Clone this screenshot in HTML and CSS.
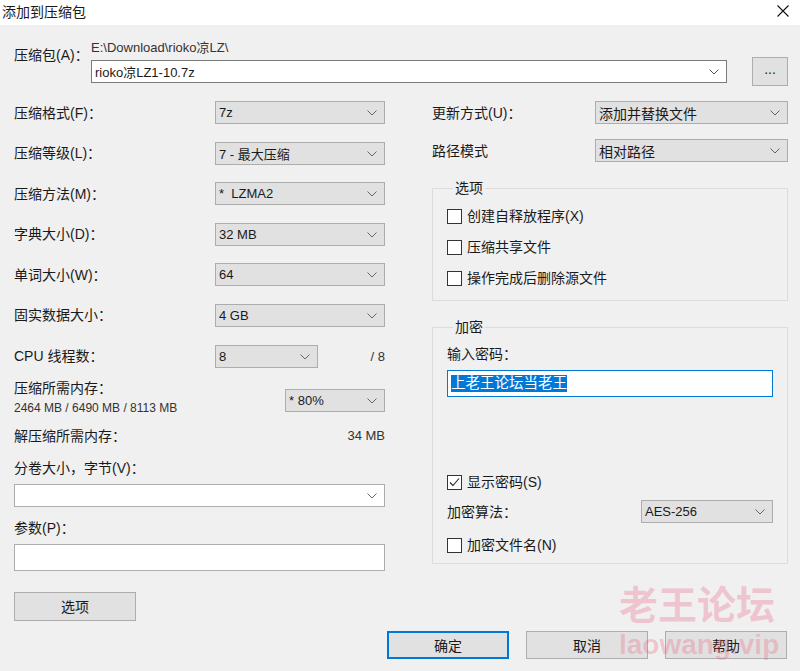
FILE: index.html
```html
<!DOCTYPE html>
<html lang="zh-CN">
<head>
    <meta charset="UTF-8">
    <title>添加到压缩包</title>
    <link rel="stylesheet" href="styles.css">
</head>
<body>
<div class="window">
    <div class="titlebar">
        <span class="title">添加到压缩包</span>
        <svg class="close" width="12" height="12" viewBox="0 0 12 12"><path d="M0.5 0.5 L11.5 11.5 M11.5 0.5 L0.5 11.5" stroke="#111" stroke-width="1.1" fill="none"/></svg>
    </div>
    <div class="content">
        <div class="archive-row">
            <div class="archive-label">压缩包(A)：</div>
            <div class="archive-path">
                <div class="path">E:\Download\rioko凉LZ\</div>
                <div class="combo white tall">
                    <span>rioko凉LZ1-10.7z</span>
                    <svg class="chev" width="10" height="6" viewBox="0 0 10 6"><path d="M0.5 0.5 L5 5 L9.5 0.5" stroke="#555" fill="none"/></svg>
                </div>
            </div>
            <button class="btn browse">...</button>
        </div>

        <div class="columns">
            <div class="col-left">
                <div class="form-grid">
                    <div class="lbl">压缩格式(F)：</div>
                    <div class="combo"><span>7z</span><svg class="chev" width="10" height="6" viewBox="0 0 10 6"><path d="M0.5 0.5 L5 5 L9.5 0.5" stroke="#666" fill="none"/></svg></div>

                    <div class="lbl">压缩等级(L)：</div>
                    <div class="combo"><span>7 - 最大压缩</span><svg class="chev" width="10" height="6" viewBox="0 0 10 6"><path d="M0.5 0.5 L5 5 L9.5 0.5" stroke="#666" fill="none"/></svg></div>

                    <div class="lbl">压缩方法(M)：</div>
                    <div class="combo"><span>*&nbsp; LZMA2</span><svg class="chev" width="10" height="6" viewBox="0 0 10 6"><path d="M0.5 0.5 L5 5 L9.5 0.5" stroke="#666" fill="none"/></svg></div>

                    <div class="lbl">字典大小(D)：</div>
                    <div class="combo"><span>32 MB</span><svg class="chev" width="10" height="6" viewBox="0 0 10 6"><path d="M0.5 0.5 L5 5 L9.5 0.5" stroke="#666" fill="none"/></svg></div>

                    <div class="lbl">单词大小(W)：</div>
                    <div class="combo"><span>64</span><svg class="chev" width="10" height="6" viewBox="0 0 10 6"><path d="M0.5 0.5 L5 5 L9.5 0.5" stroke="#666" fill="none"/></svg></div>

                    <div class="lbl">固实数据大小：</div>
                    <div class="combo"><span>4 GB</span><svg class="chev" width="10" height="6" viewBox="0 0 10 6"><path d="M0.5 0.5 L5 5 L9.5 0.5" stroke="#666" fill="none"/></svg></div>

                    <div class="lbl">CPU 线程数：</div>
                    <div class="cpu-cell">
                        <div class="combo cpu"><span>8</span><svg class="chev" width="10" height="6" viewBox="0 0 10 6"><path d="M0.5 0.5 L5 5 L9.5 0.5" stroke="#666" fill="none"/></svg></div>
                        <span class="num">/ 8</span>
                    </div>
                </div>

                <div class="mem-row">
                    <div class="mem-text">
                        <div class="lbl">压缩所需内存：</div>
                        <div class="mem-values">2464 MB / 6490 MB / 8113 MB</div>
                    </div>
                    <div class="combo mem"><span>* 80%</span><svg class="chev" width="10" height="6" viewBox="0 0 10 6"><path d="M0.5 0.5 L5 5 L9.5 0.5" stroke="#666" fill="none"/></svg></div>
                </div>

                <div class="unpack-row">
                    <div class="lbl">解压缩所需内存：</div>
                    <span class="num">34 MB</span>
                </div>

                <div class="lbl volume-lbl">分卷大小，字节(V)：</div>
                <div class="combo white"><span></span><svg class="chev" width="10" height="6" viewBox="0 0 10 6"><path d="M0.5 0.5 L5 5 L9.5 0.5" stroke="#666" fill="none"/></svg></div>

                <div class="lbl params-lbl">参数(P)：</div>
                <div class="textbox"></div>

                <button class="btn options-btn">选项</button>
            </div>

            <div class="col-right">
                <div class="form-grid right">
                    <div class="lbl">更新方式(U)：</div>
                    <div class="combo"><span class="cjk">添加并替换文件</span><svg class="chev" width="10" height="6" viewBox="0 0 10 6"><path d="M0.5 0.5 L5 5 L9.5 0.5" stroke="#666" fill="none"/></svg></div>

                    <div class="lbl">路径模式</div>
                    <div class="combo"><span class="cjk">相对路径</span><svg class="chev" width="10" height="6" viewBox="0 0 10 6"><path d="M0.5 0.5 L5 5 L9.5 0.5" stroke="#666" fill="none"/></svg></div>
                </div>

                <fieldset class="group options-group">
                    <legend>选项</legend>
                    <div class="check"><span class="box"></span>创建自释放程序(X)</div>
                    <div class="check"><span class="box"></span>压缩共享文件</div>
                    <div class="check"><span class="box"></span>操作完成后删除源文件</div>
                </fieldset>

                <fieldset class="group encrypt-group">
                    <legend>加密</legend>
                    <div class="lbl">输入密码：</div>
                    <div class="textbox focused"><span class="selected">上老王论坛当老王</span></div>
                    <div class="check show-pass">
                        <span class="box"><svg width="13" height="13" viewBox="0 0 13 13"><path d="M2 6.5 L5 9.5 L11 2.5" stroke="#222" stroke-width="1.1" fill="none"/></svg></span>显示密码(S)
                    </div>
                    <div class="algo-row">
                        <div class="lbl">加密算法：</div>
                        <div class="combo algo"><span>AES-256</span><svg class="chev" width="10" height="6" viewBox="0 0 10 6"><path d="M0.5 0.5 L5 5 L9.5 0.5" stroke="#666" fill="none"/></svg></div>
                    </div>
                    <div class="check"><span class="box"></span>加密文件名(N)</div>
                </fieldset>
            </div>
        </div>

        <div class="footer">
            <button class="btn default">确定</button>
            <button class="btn">取消</button>
            <button class="btn">帮助</button>
        </div>
    </div>

    <div class="watermark">
        <div class="wm-cn">老王论坛</div>
        <div class="wm-en">laowang.vip</div>
    </div>
</div>
</body>
</html>
```
FILE: styles.css
```css
body {
    margin: 0;
    font-family: "Liberation Sans", "Noto Sans CJK SC", sans-serif;
    font-size: 14px;
    color: #1a1a1a;
    background-color: #f0f0f0;
}
.window {
    position: relative;
    width: 800px;
    height: 671px;
    overflow: hidden;
    background: #f0f0f0;
}
.titlebar {
    height: 25px;
    background: #fff;
    display: flex;
    align-items: center;
    justify-content: space-between;
    padding: 0 11px 0 2px;
}
.title {
    font-size: 14px;
    line-height: 20px;
    margin-top: -1px;
}
.close {
    margin-top: -4px;
}
.content {
    padding: 0 12px 0 14px;
}

/* верхняя строка с архивом */
.archive-row {
    display: flex;
    align-items: flex-start;
    padding-top: 15px;
}
.archive-label {
    width: 77px;
    line-height: 20px;
    margin-top: 5px;
}
.archive-path {
    flex: 1;
}
.path {
    font-size: 13px;
    line-height: 16px;
    color: #333;
}
.browse {
    width: 36px;
    height: 29px;
    margin-left: 25px;
    margin-top: 17px;
    font-size: 11px;
    color: #666;
    padding: 0 0 6px;
}

/* выпадающие списки */
.combo {
    box-sizing: border-box;
    height: 22px;
    background: #e1e1e1;
    border: 1px solid #adadad;
    display: flex;
    align-items: center;
    justify-content: space-between;
    padding: 0 7px 0 3px;
    font-size: 13px;
    white-space: nowrap;
}
.combo .cjk {
    font-size: 14px;
}
.combo.white {
    background: #fff;
    height: 23px;
}
.combo.tall {
    margin-top: 4px;
    border-color: #7a7a7a;
    font-size: 13px;
}
.chev {
    flex-shrink: 0;
    margin-top: 1px;
}
.textbox {
    box-sizing: border-box;
    height: 27px;
    background: #fff;
    border: 1px solid #adadad;
}
.textbox.focused {
    border-color: #0078d7;
    padding: 4px 3px;
    display: flex;
    align-items: center;
}
.selected {
    background: #0078d7;
    color: #fff;
    font-size: 14.5px;
    line-height: 17px;
}
.btn {
    box-sizing: border-box;
    background: #e1e1e1;
    border: 1px solid #adadad;
    font-family: inherit;
    font-size: 14px;
    color: #1a1a1a;
    cursor: pointer;
}
.btn.default {
    border: 2px solid #0078d7;
}

/* колонки */
.columns {
    display: flex;
    justify-content: space-between;
    margin-top: 15px;
}
.col-left {
    width: 371px;
    display: flex;
    flex-direction: column;
}
.col-right {
    width: 356px;
}
.form-grid {
    display: grid;
    grid-template-columns: 201px 170px;
    grid-auto-rows: 23px;
    row-gap: 17.6px;
    align-items: center;
}
.form-grid .combo {
    height: 23px;
}
.form-grid.right {
    grid-template-columns: 163px 193px;
    row-gap: 15px;
}
.lbl {
    line-height: 20px;
    white-space: nowrap;
}
.cpu-cell {
    display: flex;
    align-items: center;
    justify-content: space-between;
}
.combo.cpu {
    width: 103px;
}
.num {
    font-size: 13px;
    color: #333;
}
.mem-row {
    display: flex;
    justify-content: space-between;
    margin-top: 10px;
}
.mem-values {
    font-size: 12px;
    line-height: 20px;
    color: #333;
}
.combo.mem {
    width: 100px;
    height: 23px;
    margin-top: 11px;
}
.unpack-row {
    display: flex;
    justify-content: space-between;
    align-items: center;
    margin-top: 8px;
}
.volume-lbl {
    margin-top: 12px;
    margin-bottom: 6px;
}
.params-lbl {
    margin-top: 11px;
    margin-bottom: 6px;
}
.options-btn {
    width: 122px;
    height: 29px;
    margin-top: 21px;
}

/* группы */
.group {
    margin: 0;
    border: 1px solid #dcdcdc;
    padding: 0 14px;
}
.group legend {
    padding: 0 2px;
    margin-left: 6px;
    line-height: 16px;
}
.options-group {
    margin-top: 18px;
    padding-top: 10px;
    padding-bottom: 12px;
}
.check {
    display: flex;
    align-items: center;
    line-height: 20px;
    height: 20px;
}
.options-group .check + .check {
    margin-top: 11px;
}
.box {
    box-sizing: border-box;
    width: 15px;
    height: 15px;
    border: 1px solid #333;
    background: #fff;
    margin-right: 5px;
    display: flex;
    align-items: center;
    justify-content: center;
}
.encrypt-group {
    margin-top: 18px;
    padding-top: 9px;
    padding-bottom: 8px;
    padding-right: 14px;
}
.encrypt-group .textbox {
    margin-top: 6px;
}
.show-pass {
    margin-top: 75px;
}
.algo-row {
    display: flex;
    justify-content: space-between;
    align-items: center;
    margin-top: 8px;
}
.combo.algo {
    width: 132px;
    height: 23px;
}
.algo-row + .check {
    margin-top: 12px;
}

/* кнопки внизу */
.footer {
    display: flex;
    justify-content: flex-end;
    gap: 17px;
    margin-top: 10px;
    margin-right: 1px;
}
.footer .btn {
    width: 122px;
    height: 28px;
}

/* водяной знак */
.watermark {
    position: absolute;
    left: 619px;
    top: 583px;
    color: rgba(236, 90, 120, 0.28);
    font-weight: bold;
    pointer-events: none;
}
.wm-cn {
    font-size: 39px;
    line-height: 46px;
}
.wm-en {
    font-size: 28px;
    line-height: 32px;
}
```
